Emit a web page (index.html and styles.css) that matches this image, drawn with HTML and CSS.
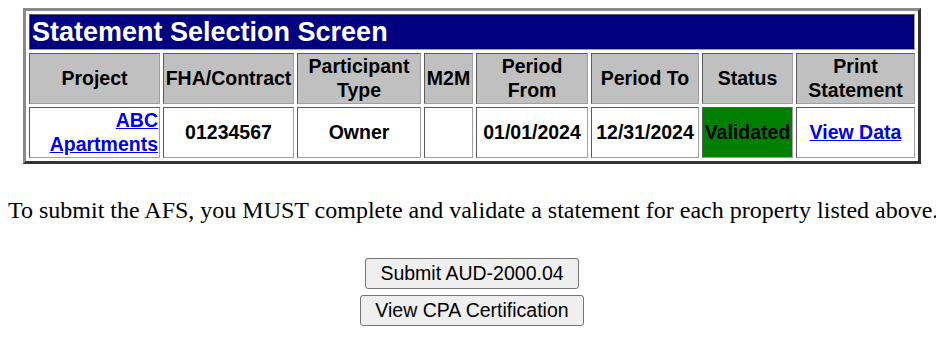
FILE: index.html
```html
<!DOCTYPE html>
<html>
<head>
<meta charset="utf-8">
<title>Statement Selection Screen</title>
<link rel="stylesheet" href="styles.css">
</head>
<body>
<table class="stmt">
  <tr>
    <td class="title" colspan="8">Statement Selection Screen</td>
  </tr>
  <tr class="head">
    <th class="c-proj">Project</th>
    <th class="c-fha">FHA/Contract</th>
    <th class="c-part">Participant Type</th>
    <th class="c-m2m">M2M</th>
    <th class="c-from">Period From</th>
    <th class="c-to">Period To</th>
    <th class="c-status">Status</th>
    <th class="c-print">Print Statement</th>
  </tr>
  <tr class="data">
    <td class="right"><a href="#">ABC Apartments</a></td>
    <td>01234567</td>
    <td>Owner</td>
    <td></td>
    <td>01/01/2024</td>
    <td>12/31/2024</td>
    <td class="ok">Validated</td>
    <td><a href="#">View Data</a></td>
  </tr>
</table>

<p class="note">To submit the AFS, you MUST complete and validate a statement for each property listed above.</p>

<div class="actions">
  <button type="button" class="btn">Submit AUD-2000.04</button>
  <button type="button" class="btn">View CPA Certification</button>
</div>
</body>
</html>
```
FILE: styles.css
```css
body {
  margin: 8px;
  background: #ffffff;
  font-family: "Liberation Serif", "Times New Roman", serif;
}

.stmt {
  margin: 0 auto;
  border-collapse: separate;
  border-spacing: 3px;
  border-style: solid;
  border-width: 3px;
  border-color: #8a8a8a #333333 #333333 #8a8a8a;
  font-family: "Liberation Sans", Arial, sans-serif;
  font-weight: bold;
  font-size: 19.5px;
  line-height: 23.5px;
}

.stmt td,
.stmt th {
  border-style: solid;
  border-width: 1px;
  border-color: #5a5a5a #a0a0a0 #a0a0a0 #5a5a5a;
  padding: 1px;
  text-align: center;
  vertical-align: middle;
  color: #000000;
}

.stmt td.title {
  background: #000080;
  color: #ffffff;
  text-align: left;
  font-size: 27px;
  line-height: 32px;
  padding: 1px 2px;
}

.head th {
  background: #c0c0c0;
  height: 47px;
  font-weight: bold;
}

.data td {
  background: #ffffff;
  height: 47px;
}

.data td.right {
  text-align: right;
}

.data td.ok {
  background: #008000;
}

.stmt a {
  color: #0000ee;
  text-decoration: underline;
}

.c-proj { width: 127px; }
.c-fha { width: 127px; }
.c-part { width: 120px; }
.c-m2m { width: 45px; }
.c-from { width: 108px; }
.c-to { width: 104px; }
.c-status { width: 87px; }
.c-print { width: 115px; }

.note {
  margin: 33px 0 0;
  text-align: center;
  font-size: 24px;
  line-height: 27px;
  white-space: nowrap;
}

.actions {
  margin-top: 34px;
  display: flex;
  flex-direction: column;
  align-items: center;
  gap: 6px;
}

.btn {
  font-family: "Liberation Sans", Arial, sans-serif;
  font-size: 19.5px;
  line-height: 23px;
  padding: 3px 14px;
  background: #efefef;
  color: #000000;
  border: 1px solid #767676;
  border-radius: 3px;
}
```
